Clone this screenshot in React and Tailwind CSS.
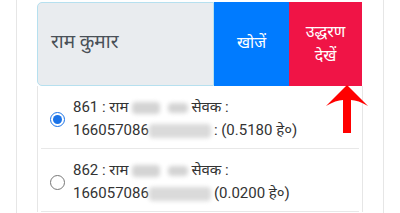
export default function App() {
  const items = [
    { id: '861', checked: true, area: '(0.5180 हे०)', colon: true },
    { id: '862', checked: false, area: '(0.0200 हे०)', colon: false },
  ];

  return (
    <div className="w-[400px] h-[213px] overflow-hidden bg-white" style={{ fontFamily: 'Roboto, "Noto Sans", sans-serif' }}>
      <div className="ml-[16px] w-[368px] h-full border-x border-[#e6e6e6] pl-[20px] pr-[20px] pt-[2px] relative">
        {/* search group */}
        <div className="flex h-[84px]">
          <div className="w-[177px] bg-[#e9ecef] border border-[#b6e0ef] rounded-l-[5px] flex items-center pl-[13px] pb-[3px]">
            <span className="text-[19px] text-[#495057]">राम कुमार</span>
          </div>
          <button className="w-[75px] bg-[#007bff] text-white text-[16px] flex items-center justify-center pb-[3px]">
            खोजें
          </button>
          <button className="w-[73px] bg-[#f01446] text-white text-[16px] leading-[24px] flex flex-col items-center justify-center">
            <span>उद्धरण</span>
            <span>देखें</span>
          </button>
        </div>

        {/* results */}
        <div className="border-x border-[#e6e6e6] px-[3px]">
          {items.map((it) => (
            <div key={it.id} className="flex items-center h-[63px] border-b border-[#e8e8e8] pt-[4px]">
              <span className="w-[32px] flex justify-center">
                {it.checked ? (
                  <span className="w-[15px] h-[15px] rounded-full border-[1.5px] border-[#1a73e8] flex items-center justify-center">
                    <span className="w-[9px] h-[9px] rounded-full bg-[#1a73e8]" />
                  </span>
                ) : (
                  <span className="w-[15px] h-[15px] rounded-full border border-[#777]" />
                )}
              </span>
              <div className="text-[15px] leading-[23px] text-[#333]">
                <div className="flex items-center">
                  <span>{it.id} : राम </span>
                  <span className="inline-block w-[28px] h-[12px] ml-[4px] bg-[#d4d4d4] rounded blur-[2px]" />
                  <span className="inline-block w-[20px] h-[10px] ml-[8px] bg-[#d4d4d4] rounded blur-[2px]" />
                  <span className="ml-[3px]">सेवक :</span>
                </div>
                <div className="flex items-center">
                  <span>166057086</span>
                  <span className="inline-block w-[62px] h-[14px] bg-[#dadada] rounded blur-[2px]" />
                  <span className="ml-[3px]">{it.colon ? ': ' : ''}{it.area}</span>
                </div>
              </div>
            </div>
          ))}
        </div>

        {/* pointer arrow */}
        <svg className="absolute left-[309px] top-[85px]" width="42" height="50" viewBox="0 0 42 50">
          <path d="M21 0 L42 21 Q32 15 25 15 L25 48 L17 48 L17 15 Q10 15 0 21 Z" fill="#ff0000" />
        </svg>
      </div>
    </div>
  );
}
